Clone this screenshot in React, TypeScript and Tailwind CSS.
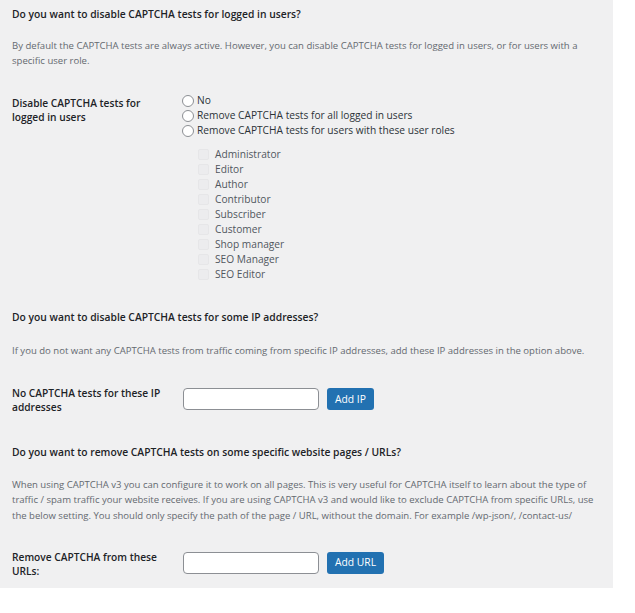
import React from 'react';

const roles = [
  'Administrator',
  'Editor',
  'Author',
  'Contributor',
  'Subscriber',
  'Customer',
  'Shop manager',
  'SEO Manager',
  'SEO Editor',
];

function Radio({ label }: { label: string }) {
  return (
    <label className="flex items-center h-[15px] gap-[3px]">
      <span className="w-[12px] h-[12px] rounded-full border border-[#8c8f94] bg-white shrink-0" />
      <span className="text-[#2c3338]">{label}</span>
    </label>
  );
}

function FieldRow({ label, button }: { label: React.ReactNode; button: string }) {
  return (
    <div className="flex">
      <div className="w-[171px] -mt-[2px] font-semibold text-[#1d2327] leading-[14px]">{label}</div>
      <input
        type="text"
        className="w-[136px] h-[22px] bg-white border border-[#8c8f94] rounded-[4px]"
      />
      <button className="ml-[8px] h-[22px] px-[8px] bg-[#2271b1] text-white rounded-[3px] text-[10.3px]">
        {button}
      </button>
    </div>
  );
}

export default function App() {
  return (
    <div
      className="w-[613px] h-[588px] bg-[#f0f0f1] pl-[12px] pt-[7px] text-[10.2px] leading-[15px] text-[#1d2327]"
      style={{ fontFamily: '"Open Sans", "Noto Sans", sans-serif' }}
    >
      <h2 className="font-semibold text-[10.3px]">Do you want to disable CAPTCHA tests for logged in users?</h2>
      <p className="mt-[16px] text-[#646970] text-[9.55px] pr-[24px]">
        By default the CAPTCHA tests are always active. However, you can disable CAPTCHA tests for logged in users, or for users with a specific user role.
      </p>

      <div className="flex mt-[25px]">
        <div className="w-[170px] pt-[3px] font-semibold leading-[14px]">
          Disable CAPTCHA tests for
          <br />
          logged in users
        </div>
        <div>
          <Radio label="No" />
          <Radio label="Remove CAPTCHA tests for all logged in users" />
          <Radio label="Remove CAPTCHA tests for users with these user roles" />
          <div className="mt-[9px] pl-[16px]">
            {roles.map((r) => (
              <label key={r} className="flex items-center h-[15px] gap-[6px]">
                <span className="w-[11px] h-[11px] rounded-[2px] border border-[#e6e6e8] bg-[#ececee] shrink-0" />
                <span className="text-[#50575e]">{r}</span>
              </label>
            ))}
          </div>
        </div>
      </div>

      <h2 className="mt-[28px] font-semibold text-[10.3px]">Do you want to disable CAPTCHA tests for some IP addresses?</h2>
      <p className="mt-[18px] text-[#646970] text-[9.55px]">
        If you do not want any CAPTCHA tests from traffic coming from specific IP addresses, add these IP addresses in the option above.
      </p>

      <div className="mt-[30px]">
        <FieldRow
          label={
            <>
              No CAPTCHA tests for these IP
              <br />
              addresses
            </>
          }
          button="Add IP"
        />
      </div>

      <h2 className="mt-[31px] font-semibold text-[10.3px]">Do you want to remove CAPTCHA tests on some specific website pages / URLs?</h2>
      <p className="mt-[17px] text-[#646970] text-[9.55px] leading-[15.3px] pr-[16px]">
        When using CAPTCHA v3 you can configure it to work on all pages. This is very useful for CAPTCHA itself to learn about the type of traffic / spam traffic your website receives. If you are using CAPTCHA v3 and would like to exclude CAPTCHA from specific URLs, use the below setting. You should only specify the path of the page / URL, without the domain. For example /wp-json/, /contact-us/
      </p>

      <div className="mt-[29px]">
        <FieldRow
          label={
            <>
              Remove CAPTCHA from these
              <br />
              URLs:
            </>
          }
          button="Add URL"
        />
      </div>
    </div>
  );
}
